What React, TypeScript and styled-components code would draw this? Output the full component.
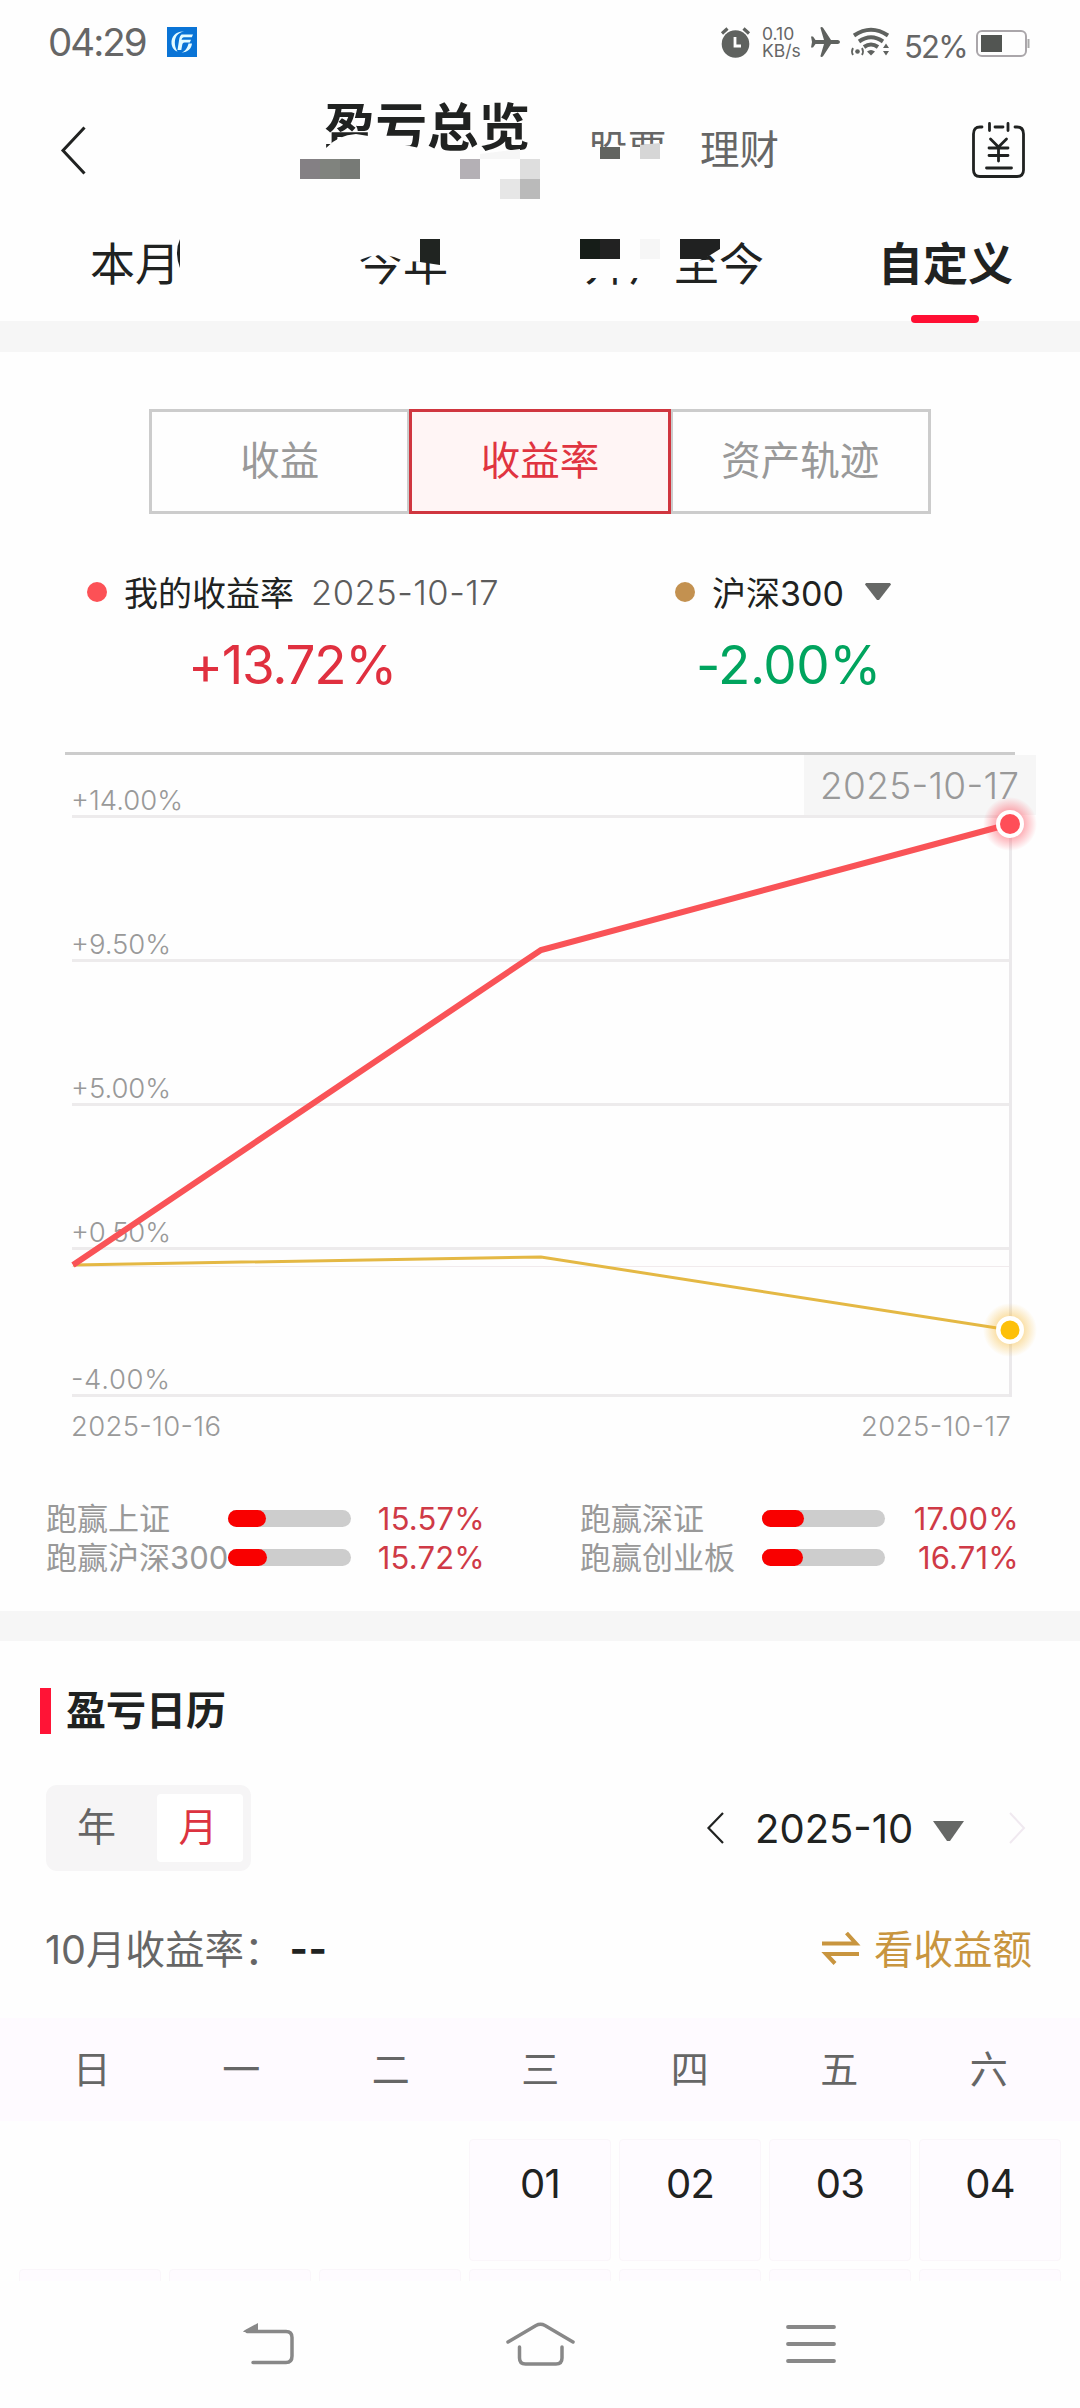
import React from "react";
import styled, { createGlobalStyle } from "styled-components";

const Global = createGlobalStyle`
  * { box-sizing: border-box; }
  body { margin: 0; background: #fefefe; }
`;

const Screen = styled.div`
  width: 1080px;
  height: 2408px;
  overflow: hidden;
  display: flex;
  flex-direction: column;
  background: #fefefe;
  color: #202221;
  font-family: Inter, "Noto Sans CJK SC", sans-serif;
`;

const Icon = styled.svg<{ $ml?: number; $mt?: number }>`
  display: block;
  flex: none;
  overflow: visible;
  margin-left: ${(p) => p.$ml ?? 0}px;
  margin-top: ${(p) => p.$mt ?? 0}px;
`;

/* status bar */
const StatusBar = styled.div`
  height: 84px;
  display: flex;
  align-items: center;
  padding: 0 50px 0 48px;
  color: #666;
`;
const Clock = styled.span`
  font-size: 38.5px;
  font-weight: 400;
  letter-spacing: -2px;
  width: 119px;
  white-space: nowrap;
`;
const StatusRight = styled.div`
  margin-left: auto;
  display: flex;
  align-items: center;
`;
const Speed = styled.div`
  width: 38px;
  margin: 0 11px 0 12px;
  font-size: 17.5px;
  line-height: 17px;
  white-space: nowrap;
`;
const Percent = styled.span`
  font-size: 31px;
  font-weight: 400;
  margin: 8px 10px 0 15px;
  width: 62px;
  letter-spacing: -1.8px;
`;

/* header */
const Header = styled.header`
  height: 136px;
  position: relative;
  display: flex;
  align-items: center;
  padding: 0 55px 4px 61px;
`;
const HeaderTabs = styled.div`
  flex: 1;
  display: flex;
  align-items: center;
  padding-left: 238px;
`;
const HeaderTitle = styled.h1`
  margin: -46px 0 0;
  width: 264px;
  font-size: 51.5px;
  line-height: 60px;
  font-weight: 700;
  white-space: nowrap;
`;
const HeaderTab = styled.span`
  width: 112px;
  font-size: 39.5px;
  line-height: 50px;
  margin-top: -1px;
  color: #666;
`;
const Overlay = styled.svg`
  position: absolute;
  left: 0;
  top: 0;
  pointer-events: none;
`;

/* period tabs */
const PeriodTabs = styled.nav`
  height: 101px;
  position: relative;
  display: grid;
  grid-template-columns: 268px 226px 294px 140px;
  padding: 15px 0 0 90px;
`;
const Period = styled.div<{ $active?: boolean }>`
  position: relative;
  font-size: 45px;
  line-height: 60px;
  font-weight: ${(p) => (p.$active ? 700 : 400)};
  white-space: nowrap;
  &::after {
    content: "";
    display: ${(p) => (p.$active ? "block" : "none")};
    position: absolute;
    left: 33px;
    top: 80px;
    width: 68px;
    height: 8px;
    border-radius: 4px;
    background: #ff0f33;
    z-index: 1;
  }
`;
const Band = styled.div<{ $h: number }>`
  height: ${(p) => p.$h}px;
  flex: none;
  background: #f6f6f6;
`;

/* overview */
const Overview = styled.section`
  height: 1259px;
  flex: none;
  display: flex;
  flex-direction: column;
`;
const Segments = styled.div`
  margin: 57px 149px 0;
  height: 105px;
  display: flex;
`;
const Segment = styled.button<{ $active?: boolean }>`
  flex: 1;
  margin: 0 ${(p) => (p.$active ? -1 : 0)}px;
  position: relative;
  z-index: ${(p) => (p.$active ? 1 : 0)};
  border: 3px solid ${(p) => (p.$active ? "#d0363f" : "#ccc")};
  background: ${(p) => (p.$active ? "#fff5f5" : "transparent")};
  color: ${(p) => (p.$active ? "#e03440" : "#999")};
  font: 400 39.5px/40px Inter, "Noto Sans CJK SC", sans-serif;
  padding: 0 0 1px;
`;
const Legend = styled.div`
  display: flex;
  height: 238px;
  padding-top: 52px;
`;
const LegendItem = styled.div<{ $left: number; $w: number }>`
  margin-left: ${(p) => p.$left}px;
  width: ${(p) => p.$w}px;
`;
const LegendHead = styled.div`
  display: flex;
  align-items: center;
  height: 52px;
  font-size: 34px;
  white-space: nowrap;
`;
const LegendName = styled.span`
  margin-top: -2px;
`;
const Dot = styled.i<{ $color: string }>`
  width: 20px;
  height: 20px;
  border-radius: 50%;
  margin-right: 17px;
  background: ${(p) => p.$color};
`;
const LegendDate = styled.span`
  margin-left: 17px;
  font-size: 34.5px;
  font-weight: 350;
  letter-spacing: 0.5px;
  color: #5c5c5c;
`;
const LegendValue = styled.div<{ $color: string; $pad: number; $ls: number }>`
  margin-top: 15px;
  padding-left: ${(p) => p.$pad}px;
  font-size: 53px;
  line-height: 64px;
  letter-spacing: ${(p) => p.$ls}px;
  color: ${(p) => p.$color};
`;
const Chart = styled.svg`
  display: block;
  flex: none;
  font-family: Inter, sans-serif;
  font-weight: 350;
`;

const Stats = styled.div`
  display: grid;
  grid-template-columns: 534px 1fr;
  grid-auto-rows: 39px;
  padding: 0 0 0 46px;
  margin-top: 39px;
`;
const Stat = styled.div`
  display: flex;
  align-items: center;
  font-size: 31px;
  line-height: 39px;
  color: #999;
  white-space: nowrap;
`;
const StatLabel = styled.span`
  width: 182px;
`;
const Track = styled.div`
  width: 123px;
  height: 17px;
  border-radius: 9px;
  background: #cdcdcd;
`;
const Fill = styled.div<{ $w: number }>`
  width: ${(p) => p.$w}px;
  height: 17px;
  border-radius: 9px;
  background: #f90000;
`;
const StatValue = styled.span`
  width: 134px;
  text-align: right;
  color: #cf3a46;
  font-weight: 400;
  letter-spacing: 0.2px;
`;

/* calendar */
const Calendar = styled.section`
  flex: 1;
  display: flex;
  flex-direction: column;
`;
const SectionTitle = styled.h2`
  margin: 47px 0 0 40px;
  height: 46px;
  display: flex;
  align-items: center;
  font-size: 40px;
  line-height: 46px;
  font-weight: 700;
  &::before {
    content: "";
    width: 11px;
    height: 46px;
    margin-right: 15px;
    background: #ff1436;
  }
`;
const Controls = styled.div`
  margin-top: 51px;
  height: 86px;
  display: flex;
  align-items: center;
  padding: 0 55px 0 46px;
`;
const Toggle = styled.div`
  width: 205px;
  height: 86px;
  border-radius: 11px;
  background: #f6f5f6;
  display: flex;
  padding: 9px 8px 9px 9px;
`;
const ToggleItem = styled.div<{ $active?: boolean }>`
  width: ${(p) => (p.$active ? 86 : 102)}px;
  padding: 0 ${(p) => (p.$active ? 4 : 19)}px 4px 0;
  border-radius: 4px;
  background: ${(p) => (p.$active ? "#fff" : "transparent")};
  color: ${(p) => (p.$active ? "#dc3340" : "#666")};
  font-size: 39px;
  line-height: 65px;
  text-align: center;
`;
const MonthPicker = styled.div`
  margin-left: auto;
  display: flex;
  align-items: center;
  font-size: 40px;
`;
const MonthLabel = styled.span`
  width: 178px;
  margin-left: 31px;
`;
const Summary = styled.div`
  height: 147px;
  display: flex;
  align-items: center;
  padding: 3px 48px 0 45px;
  font-size: 39.5px;
  color: #666;
`;
const Dash = styled.b`
  margin: 5px 0 0 6px;
  letter-spacing: 0.5px;
  color: #202221;
  font-weight: 700;
`;
const Switch = styled.div`
  margin-left: auto;
  display: flex;
  align-items: center;
  gap: 15px;
  color: #c8953f;
`;
const Week = styled.div`
  height: 103px;
  display: grid;
  grid-template-columns: repeat(7, 149.5px);
  padding: 0 0 6px 17px;
  align-items: center;
  text-align: center;
  background: #fefaff;
  color: #666;
  font-size: 38px;
`;
const Days = styled.div`
  margin-top: 18px;
  height: 142px;
  overflow: hidden;
  display: grid;
  grid-template-columns: repeat(7, 142px);
  gap: 8px;
  grid-auto-rows: 122px;
  padding-left: 19px;
`;
const Day = styled.div<{ $blank?: boolean }>`
  border-radius: 4px;
  border: 1px solid ${(p) => (p.$blank ? "transparent" : "#faf6fa")};
  background: ${(p) => (p.$blank ? "transparent" : "#fefbff")};
  padding-top: 20px;
  font-size: 40px;
  line-height: 48px;
  letter-spacing: -0.8px;
  text-align: center;
`;
const SystemNav = styled.footer`
  height: 127px;
  flex: none;
  display: flex;
  align-items: center;
  padding: 0 244px 2px;
  justify-content: space-between;
  color: #888;
`;

const grid = [
  { y: 816.5, t: "+14.00%", w: 112 },
  { y: 960.5, t: "+9.50%", w: 100 },
  { y: 1104.5, t: "+5.00%", w: 100 },
  { y: 1248.5, t: "+0.50%", w: 100 },
  { y: 1395.5, t: "-4.00%", w: 99 },
];
const stats = [
  { l: "跑赢上证", v: "15.57%", f: 38 },
  { l: "跑赢深证", v: "17.00%", f: 42 },
  { l: "跑赢沪深300", v: "15.72%", f: 39 },
  { l: "跑赢创业板", v: "16.71%", f: 41 },
];

const AppLogo = () => (
  <Icon width="30" height="30" viewBox="0 0 30 30">
    <rect width="30" height="30" fill="#0a74d6" />
    <g fill="#e4fbff">
      <path d="M17 4.500C9 4 4 9.500 4.500 16.500c.3 4.500 3.500 7.500 6 8C8 21 6.500 14 9.500 9 11.500 6.500 14 5 17 4.500z" />
      <path d="M14.500 7.500H26L24.800 10.300H17c-1.500 0-2 1-2.500 2.500H24L22.800 15.500H17.500c-1.500 0-2 1-2.300 2.500L14.300 23H10.500L12 13.500c.4-3 .8-4.500 2.500-6z" />
      <path d="M21.500 16.500H25C24.500 21.500 21 25 14.500 25.800 19 23.500 20.500 20.500 21.500 16.500z" />
    </g>
  </Icon>
);

export default function App() {
  return (
    <Screen>
      <Global />
      <StatusBar>
        <Clock>04:29</Clock>
        <AppLogo />
        <StatusRight>
          <Icon width="29" height="31" viewBox="0 0 29 31" fill="#5f625f">
            <circle cx="14.500" cy="17" r="13.800" />
            <path d="M1 6.500 6.500 1.500M28 6.500 22.500 1.500" stroke="#5f625f" strokeWidth="3.200" />
            <path d="M14 10v9h6" fill="none" stroke="#fff" strokeWidth="2.800" />
          </Icon>
          <Speed>0.10<br />KB/s</Speed>
          <Icon width="29" height="30" viewBox="0 0 29 30" fill="#5f625f">
            <path d="M0 9.500H2L4.500 13H13L9.500 1.200Q9.300 0 10.500 0 11.500 0 12.200 1L20 13H27Q29 13.300 29 15 29 16.700 27 17H20L12.200 29Q11.500 30 10.500 30 9.300 30 9.500 28.800L13 17H4.500L2 20.500H0L1 15z" />
          </Icon>
          <Icon width="38" height="28" viewBox="0 0 38 28" $ml={11}>
            <g fill="none" stroke="#5f625f" strokeWidth="4">
              <path d="M3 7.500Q20 -4 37 7.500" />
              <path d="M8 13.500Q20 5 32 13.500" />
              <path d="M13 19Q20 14 27 19" />
              <path d="M2 20q-2 3.500 0 7M11 20q2 3.500 0 7" strokeWidth="1.800" />
            </g>
            <path d="M16 23.500q4-3 8 0l-4 4zM32 20l3-4.500 3 4.500zM32 23h6l-3 4.500z" fill="#5f625f" />
            <circle cx="6.500" cy="23.500" r="2.300" fill="#5f625f" />
          </Icon>
          <Percent>52%</Percent>
          <Icon width="54" height="27" viewBox="0 0 54 27" $mt={2}>
            <rect x="1" y="1" width="49" height="25" rx="5" fill="none" stroke="#aaa6aa" strokeWidth="2" />
            <rect x="5" y="5" width="21" height="17" fill="#525552" />
            <path d="M52.500 9v9" stroke="#aaa" strokeWidth="2" />
          </Icon>
        </StatusRight>
      </StatusBar>

      <Header>
        <Icon width="25" height="49" viewBox="0 0 25 49" fill="none" stroke="#202221" strokeWidth="3">
          <path d="M23.500 1.500 2 24.500l21.500 23" />
        </Icon>
        <HeaderTabs>
          <HeaderTitle>盈亏总览</HeaderTitle>
          <HeaderTab>股票</HeaderTab>
          <HeaderTab>理财</HeaderTab>
        </HeaderTabs>
        <Icon width="53" height="56" viewBox="0 0 53 56" fill="none" stroke="#202221" strokeWidth="2.800" strokeLinecap="round">
          <path d="M10 5H8Q1.500 5 1.500 12V48q0 6.500 6.500 6.500H45q6.500 0 6.500-6.500V12Q51.500 5 45 5h-2" />
          <path d="M17.500 1.500v7M36 1.500v7M23 5h8" />
          <path d="M18.500 17 26.500 25l8-8M17 26h19M17 33.500h19M26.500 25v14M14.500 46h25" />
        </Icon>
        <Overlay width="1080" height="136" viewBox="0 84 1080 136">
          <path d="M318 158 326 148Q338 135 356 134 372 136 386 140L400 144 417 147.500 422 158z" fill="#fefefe" />
          <path d="M585 147H640L668 143V174H585z" fill="#fefefe" />
          <path d="M300 159h20v20h-20z" fill="#848084" />
          <path d="M320 159h20v20h-20z" fill="#80837e" />
          <path d="M340 159h20v20h-20z" fill="#777a76" />
          <path d="M460 159h20v20h-20z" fill="#b4b0b5" />
          <path d="M480 154 520 149V159H480z" fill="#f6f6f6" />
          <path d="M520 159h20v20h-20z" fill="#dedede" />
          <path d="M500 179h20v20h-20z" fill="#e6e6e6" />
          <path d="M520 179h20v20h-20z" fill="#bababa" />
          <path d="M600 147h20v12h-20z" fill="#626460" />
          <path d="M640 145 660 143V159H640z" fill="#d6d6d6" />
        </Overlay>
      </Header>

      <PeriodTabs>
        <Period>本月</Period>
        <Period>今年</Period>
        <Period>开户至今</Period>
        <Period $active>自定义</Period>
        <Overlay width="1080" height="101" viewBox="0 220 1080 101">
          <path d="M180 239Q174 252 180 268z" fill="#202221" />
          <path d="M356 236H452V263L404 261 394 257Q376 251 356 262z" fill="#fefefe" />
          <path d="M420 239h20v26l-20-3z" fill="#202421" />
          <path d="M580 238H676V278H580z" fill="#fefefe" />
          <path d="M676 236H720.500V250L706 257 694 263H676z" fill="#fefefe" />
          <path d="M580 239h20v20h-20z" fill="#161d18" />
          <path d="M600 239h20v20h-20z" fill="#222" />
          <path d="M640 239h20v20h-20z" fill="#f6f6f6" />
          <path d="M680 239H720V249L704 259H680z" fill="#202121" />
        </Overlay>
      </PeriodTabs>
      <Band $h={31} />

      <Overview>
        <Segments>
          <Segment>收益</Segment>
          <Segment $active>收益率</Segment>
          <Segment>资产轨迹</Segment>
        </Segments>
        <Legend>
          <LegendItem $left={87} $w={588}>
            <LegendHead>
              <Dot $color="#fc5156" />
              <LegendName>我的收益率</LegendName>
              <LegendDate>2025-10-17</LegendDate>
            </LegendHead>
            <LegendValue $color="#e0303f" $pad={101} $ls={-1.3}>+13.72%</LegendValue>
          </LegendItem>
          <LegendItem $left={0} $w={300}>
            <LegendHead>
              <Dot $color="#c39150" />
              <LegendName>沪深300</LegendName>
              <Icon width="26" height="18" viewBox="0 0 26 18" fill="#666866" $ml={21}>
                <path d="M1 0h24l1 1.500L14 17h-2L0 1.500z" />
              </Icon>
            </LegendHead>
            <LegendValue $color="#00a45e" $pad={21} $ls={-0.5}>-2.00%</LegendValue>
          </LegendItem>
        </Legend>

        <Chart width="1080" height="708" viewBox="0 752 1080 708">
          <defs>
            <radialGradient id="glowRed">
              <stop offset=".45" stopColor="#ff5160" stopOpacity=".5" />
              <stop offset="1" stopColor="#ff5160" stopOpacity="0" />
            </radialGradient>
            <radialGradient id="glowGold">
              <stop offset=".45" stopColor="#f5b52c" stopOpacity=".45" />
              <stop offset="1" stopColor="#f5b52c" stopOpacity="0" />
            </radialGradient>
          </defs>
          <path d="M65 753.500H1015" stroke="#ccc" strokeWidth="3" />
          <path d="M804 755h232v60H804z" fill="#f6f6f6" />
          {grid.map((g) => (
            <React.Fragment key={g.t}>
              <path d={`M72 ${g.y}H1010`} stroke="#edebec" strokeWidth="3" />
              <text x="71" y={g.y - 7} fontSize="27.500" fill="#999" textLength={g.w}>{g.t}</text>
            </React.Fragment>
          ))}
          <path d="M72 1266.500H1010" stroke="#f1ebed" strokeWidth="1" />
          <path d="M1010.500 818V1397" stroke="#ebe9eb" strokeWidth="3" />
          <text x="820" y="799" fontSize="37" fill="#999" textLength="199">2025-10-17</text>
          <text x="71" y="1436" fontSize="27.500" fill="#999" textLength="150">2025-10-16</text>
          <text x="861" y="1436" fontSize="27.500" fill="#999" textLength="150">2025-10-17</text>
          <path d="M73 1265 541 1257 1010 1330" fill="none" stroke="#e4b844" strokeWidth="3" />
          <path d="M73 1265 541 950 1010 824" fill="none" stroke="#f95357" strokeWidth="6" />
          <circle cx="1010" cy="824" r="27" fill="url(#glowRed)" />
          <circle cx="1010" cy="824" r="14" fill="#fff" />
          <circle cx="1010" cy="824" r="10" fill="#ff4e58" />
          <circle cx="1010" cy="1330" r="27" fill="url(#glowGold)" />
          <circle cx="1010" cy="1330" r="14" fill="#fff" />
          <circle cx="1010" cy="1330" r="9.500" fill="#fdc00a" />
        </Chart>

        <Stats>
          {stats.map((s) => (
            <Stat key={s.l}>
              <StatLabel>{s.l}</StatLabel>
              <Track><Fill $w={s.f} /></Track>
              <StatValue>{s.v}</StatValue>
            </Stat>
          ))}
        </Stats>
      </Overview>
      <Band $h={30} />

      <Calendar>
        <SectionTitle>盈亏日历</SectionTitle>
        <Controls>
          <Toggle>
            <ToggleItem>年</ToggleItem>
            <ToggleItem $active>月</ToggleItem>
          </Toggle>
          <MonthPicker>
            <Icon width="17" height="32" viewBox="0 0 17 32" fill="none" stroke="#202221" strokeWidth="2.200">
              <path d="M16 1 1.500 16 16 31" />
            </Icon>
            <MonthLabel>2025-10</MonthLabel>
            <Icon width="31" height="21" viewBox="0 0 31 21" fill="#666866" $mt={7}>
              <path d="M0 0h31L17 20h-3z" />
            </Icon>
            <Icon width="16" height="32" viewBox="0 0 16 32" fill="none" stroke="#f0e9f0" strokeWidth="2" $ml={45}>
              <path d="M1 1 15 16 1 31" />
            </Icon>
          </MonthPicker>
        </Controls>
        <Summary>
          10月收益率：<Dash>--</Dash>
          <Switch>
            <Icon width="37" height="34" viewBox="0 0 37 34" fill="none" stroke="#c8953f" strokeWidth="4" $mt={3}>
              <path d="M0 12.500H34L24.500 2M37 23H4l9 9.500" />
            </Icon>
            看收益额
          </Switch>
        </Summary>
        <Week>
          {["日", "一", "二", "三", "四", "五", "六"].map((d) => (
            <span key={d}>{d}</span>
          ))}
        </Week>
        <Days>
          {["", "", "", "01", "02", "03", "04"].map((d, i) => (
            <Day key={i} $blank={!d}>{d}</Day>
          ))}
          {[5, 6, 7, 8, 9, 10, 11].map((d) => (
            <Day key={d} />
          ))}
        </Days>
      </Calendar>

      <SystemNav>
        <Icon width="50" height="42" viewBox="0 0 50 42" fill="none" stroke="#888" strokeWidth="3.500" strokeLinecap="round">
          <path d="M3 8.500H42q6 0 6 6V33q0 6.500-6 6.500H9" />
          <path d="M-1 9Q0 7.500 1 7L14 0V9z" fill="#888" stroke="none" />
        </Icon>
        <Icon width="69" height="44" viewBox="0 0 69 44" fill="none" stroke="#888" strokeWidth="3.500" strokeLinecap="round">
          <path d="M2 20 30 3.500q4.500-2.500 9 0L67 20" />
          <path d="M13.500 25V36q0 6 6 6H50q6 0 6-6V25" />
        </Icon>
        <Icon width="50" height="40" viewBox="0 0 50 40" stroke="#888" strokeWidth="3.800" strokeLinecap="round">
          <path d="M2 3H48M2 20H48M2 37H48" />
        </Icon>
      </SystemNav>
    </Screen>
  );
}
